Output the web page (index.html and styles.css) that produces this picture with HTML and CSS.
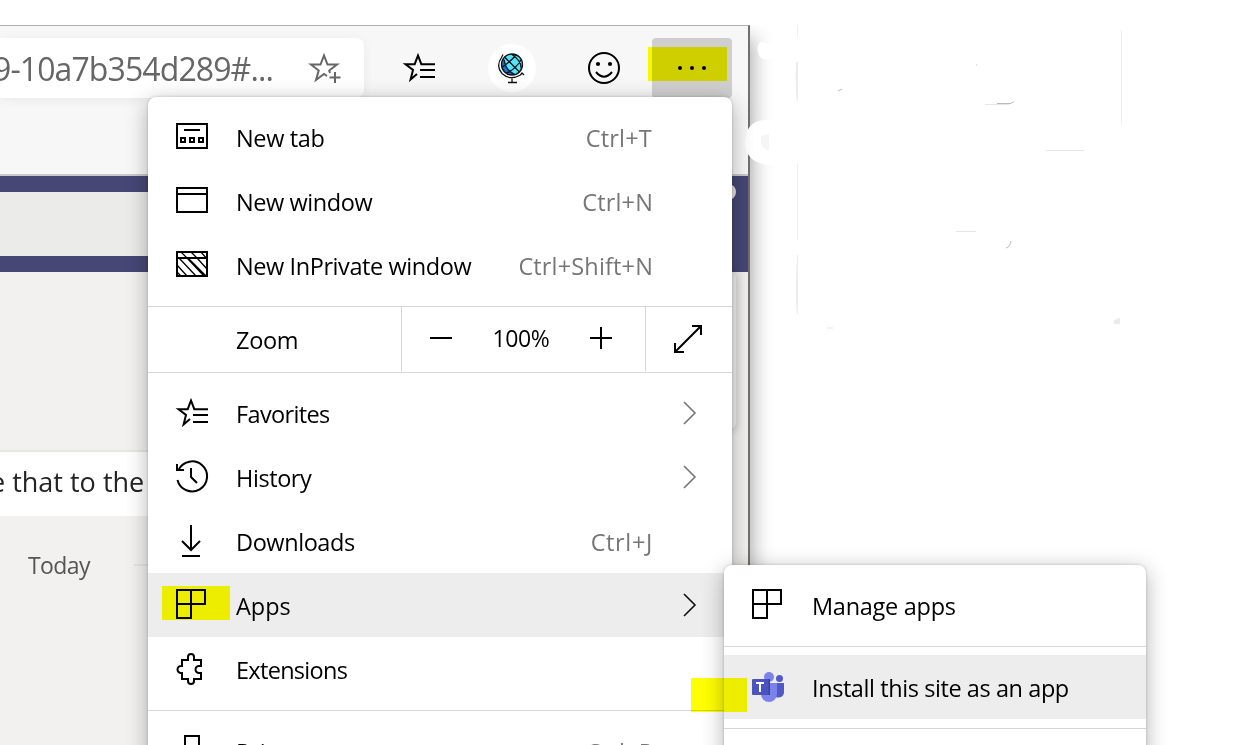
FILE: index.html
```
<!DOCTYPE html>
<html lang="en">
<head>
<meta charset="utf-8">
<title>Browser menu</title>
<link rel="stylesheet" href="styles.css">
</head>
<body>
<svg class="defs" width="0" height="0">
  <symbol id="favs" viewBox="0 0 34 34"><path d="M15 24 8.600 29.500 11 20 3.500 14.200h9.200L16 5.500l3.300 8.700H33M18 20h15M18 27h15" fill="none" stroke="currentColor" stroke-width="2"/></symbol>
  <symbol id="apps" viewBox="0 0 32 32"><path d="M2 2h28v14H2zM2 2h14v28H2z" fill="none" stroke="currentColor" stroke-width="2"/></symbol>
  <symbol id="chev" viewBox="0 0 16 26"><path d="m2 2 11 11L2 24" fill="none" stroke="currentColor" stroke-width="1.6"/></symbol>
</svg>
<main class="desktop">
  <section class="window">
    <header class="toolbar">
      <div class="address"><span class="url">9-10a7b354d289#...</span>
        <svg class="star" width="34" height="34" viewBox="0 0 34 34"><path d="m22 22-.8-2.500L29 13.500H19.500L16 4.500l-3.500 9H3l7.700 6-2.700 9.500 8-6 3 2M27 21v11M21.500 26.500h11" fill="none" stroke="#666" stroke-width="2"/></svg>
      </div>
      <svg class="tool-favs" width="34" height="34"><use href="#favs"/></svg>
      <div class="profile">
        <svg width="30" height="34" viewBox="0 0 30 34"><circle cx="16" cy="13.500" r="10.500" fill="#50e6ff"/><path d="M7.500 7.500A10.500 10.500 0 0 0 20 23.300C13 20 9 15 7.500 7.500Z" fill="#0078d4"/><g fill="none" stroke="#111" stroke-width="1.300"><circle cx="16" cy="13.500" r="10.500"/><path d="m8.500 6 15 15M16 3.500q10 7 9 14M8 8.500q2 12 11 15M6.500 16Q15 10 20 4M10 22q9-3 15-13M7 3.500 5.500 6.500Q-.5 15 6 22.500q8 7.500 18.500 1.500l1.500-2 2 2M16 27.500v4M12 31.500h9"/></g></svg>
      </div>
      <svg class="smile" width="34" height="34" viewBox="0 0 34 34"><circle cx="17" cy="17" r="15" fill="none" stroke="#000" stroke-width="2"/><circle cx="11" cy="13" r="2.1"/><circle cx="23" cy="13" r="2.1"/><path d="M9 21q8 9.500 16 0" fill="none" stroke="#000" stroke-width="2"/></svg>
      <div class="more"><i></i><i></i><i></i></div>
    </header>
    <div class="teams-bar"><div class="search"></div><div class="avatar"></div></div>
    <div class="content">
      <div class="panel"></div>
      <div class="message">e that to the</div>
      <div class="day"><span>Today</span><i></i></div>
    </div>
  </section>
  <svg class="marks" width="400" height="320" viewBox="740 20 400 320">
    <path d="M780 44h-12c-7-5-12 0-10 8 1 6 5 8 10 7h12ZM780 120h-9c-18-1-25 6-26 23 0 14 12 23 28 22h7Z" fill="#fff"/>
    <path d="M761 136q4-1 8-2v16q-6-1-8-6Z" fill="#f5f5f5"/>
    <g fill="none" stroke="#e6e6e6"><path d="M797.500 25v12M797.500 164v76M1121.500 30v95" stroke="#efefef"/><path d="M796 62q-1 25 1 39h1V62ZM797 255q-2 40 0 60l1-2v-58Z" fill="#ececec" stroke="none"/><path d="M985 104.500h24M1046 150.500h38M956 231.500h20M827 328h6"/><path d="M997 103.500h14l3-2M838 91l4-2M1006 248q4-1 5-7" stroke="#bbb"/><path d="m976.500 64v2" stroke="#eadfd1"/></g><path d="m1114 320 6-2v6h-6Z" fill="#eaeaea"/>
  </svg>

  <nav class="menu">
    <div class="item"><svg class="icon" width="34" height="34" viewBox="0 0 34 34"><path d="M2 5h30v24H2zM9 11h16"/><path d="M6 19h4v4H6zM15 19h4v4h-4zM24 19h4v4h-4z"/></svg><span class="t1">New tab</span><kbd class="k1">Ctrl+T</kbd></div>
    <div class="item"><svg class="icon" width="34" height="34" viewBox="0 0 34 34"><path d="M2 5h30v24H2zM2 11h30"/></svg><span class="t2">New window</span><kbd class="k2">Ctrl+N</kbd></div>
    <div class="item"><svg class="icon" width="34" height="34" viewBox="0 0 34 34"><path d="M2 5h30v24H2zM2 11h30"/><path d="m6 5 6 6 17 18M16 5l6 6 10 11M26 5l6 7M13 11l18 18M4 11l17 18M2 18l10 11M2 25l4 4" stroke-width="1.300"/></svg><span class="t2">New InPrivate window</span><kbd class="k2">Ctrl+Shift+N</kbd></div>
    <div class="zoom">
      <span class="zoom-label">Zoom</span>
      <div class="zoom-controls"><svg class="icon" width="24" height="24" viewBox="0 0 24 24"><path d="M1 12h22"/></svg><b>100%</b><svg class="icon" width="24" height="24" viewBox="0 0 24 24"><path d="M1 12h22M12 1v22"/></svg></div>
      <div class="full"><svg class="icon" width="30" height="30" viewBox="0 0 30 30"><path d="M2 28 28 2M19 2h9v9M2 19v9h9"/></svg></div>
    </div>
    <div class="item"><svg class="icon" width="34" height="34"><use href="#favs"/></svg><span class="t4">Favorites</span><svg class="chev" width="16" height="26"><use href="#chev"/></svg></div>
    <div class="item"><svg class="icon" width="34" height="34" viewBox="0 0 34 34"><path d="M2.500 21a15 15 0 1 0 1-10M2 5v6h7M16 9v9l6 6"/></svg><span class="t2">History</span><svg class="chev" width="16" height="26"><use href="#chev"/></svg></div>
    <div class="item"><svg class="icon" width="34" height="34" viewBox="0 0 34 34"><path d="M16 2v25M7 18l9 9 9-9M7 33h18"/></svg><span class="t2">Downloads</span><kbd class="k4">Ctrl+J</kbd></div>
    <div class="item active"><svg class="icon apps" width="32" height="32"><use href="#apps"/></svg><span>Apps</span><svg class="chev" width="16" height="26"><use href="#chev"/></svg></div>
    <div class="item"><svg class="icon" width="34" height="34" viewBox="0 0 34 34"><path d="M7 9h6V6a3 3 0 0 1 6 0v3h7v6h-2a3.500 3.500 0 0 0 0 7h2v6h-7v2a3 3 0 0 1-6 0v-2H7v-6H6a3.500 3.500 0 0 1 0-7h1Z"/></svg><span class="t8">Extensions</span></div>
    <hr>
    <div class="item"><svg class="icon" width="34" height="34" viewBox="0 0 34 34"><path d="M10 13V3h14v10M2 13h30v14H2z"/></svg><span>Print</span><kbd class="k2">Ctrl+P</kbd></div>
  </nav>

  <nav class="submenu">
    <div class="item"><svg class="icon apps" width="32" height="32"><use href="#apps"/></svg><span class="t9">Manage apps</span></div>
    <hr>
    <div class="item active"><svg class="icon teams" width="34" height="34" viewBox="0 0 34 34"><g stroke="none"><circle cx="18" cy="8" r="5" fill="#7b83eb"/><circle cx="28.500" cy="9.500" r="3.500" fill="#5059c9"/><path d="M25 14h8v9a5.500 5.500 0 0 1-8 5Z" fill="#5059c9"/><path d="M10 14h16v11a8 8 0 0 1-16 0Z" fill="#7b83eb"/><path d="M10 10h9v16h-8Z" fill="#3c4299"/><rect x="1" y="10" width="16.500" height="16" rx="1" fill="#4b53bc"/><path d="M5 13h8v2h-3v8H8v-8H5Z" fill="#fff"/></g></svg><span class="t2">Install this site as an app</span></div>
    <hr>
  </nav>
  <i class="highlight h-more"></i><i class="highlight h-apps"></i><i class="highlight h-install"></i>
</main>
</body>
</html>
```
FILE: styles.css
```
* { box-sizing: border-box; }
body { margin: 0; background: #fff; font: 23.5px/1 "Open Sans", "Noto Sans", sans-serif; color: #000; }
.defs { position: absolute; }
.desktop { position: relative; width: 1253px; height: 745px; overflow: hidden; padding-top: 25px; }
.window { width: 750px; height: 730px; border-top: 1px solid #b0b0b0; border-right: 2px solid #707070; background: #f2f1ef; box-shadow: 4px 12px 18px rgba(0,0,0,.3); clip-path: inset(0 -40px 0 0); }
.toolbar { display: flex; align-items: flex-start; height: 150px; padding-top: 12px; background: #f7f7f7; border-bottom: 2px solid #c8cac8; }
.address { display: flex; width: 364px; height: 60px; background: #fff; border-radius: 0 8px 8px 0; box-shadow: 0 2px 12px rgba(0,0,0,.06); }
.url { width: 306px; margin-left: -7px; padding-top: 1px; font-size: 32px; line-height: 60px; color: #666; white-space: nowrap; letter-spacing: -.9px; }
.star { margin: 13px 0 0 9px; }
.tool-favs { margin: 12px 0 0 38px; }
.profile { display: flex; justify-content: center; width: 48px; height: 48px; padding-top: 7px; margin: 6px 0 0 52px; background: #fff; border-radius: 50%; }
.profile svg { margin-left: -3px; }
.smile { margin: 13px 0 0 51px; }
.more { display: flex; gap: 8px; width: 80px; height: 60px; margin-left: 31px; padding: 28px 0 0 26px; background: #cfcfcf; border-radius: 4px; }
.more i { width: 4px; height: 4px; background: #000; border-radius: 50%; }
.teams-bar { display: flex; height: 96px; padding-top: 16px; background: #464775; overflow: hidden; }
.search { width: 500px; height: 64px; background: #ebebea; }
.avatar { width: 16px; height: 16px; margin: -8px 0 0 220px; background: #e6e4e2; border-radius: 50%; }
.content { height: 473px; background: #f2f1ef; }
.panel { width: 436px; height: 157px; margin: 0 0 21px 300px; background: #f2f1ef; border-radius: 0 6px 6px 0; box-shadow: 2px 2px 7px rgba(0,0,0,.12); }
.message { width: 600px; height: 66px; text-indent: -10px; background: #fff; border-top: 2px solid #e6e6e4; font-size: 27px; line-height: 59px; color: #242424; }
.day { display: flex; align-items: center; height: 98px; padding-left: 28px; font-size: 23px; color: #555; }
.day span { width: 106px; letter-spacing: -.6px; }
.day i { width: 300px; height: 2px; background: #e5e4e2; }
.marks { position: absolute; left: 740px; top: 20px; }
.menu, .submenu { position: absolute; padding-top: 8px; background: #fff; border-radius: 8px; box-shadow: 0 5px 22px rgba(0,0,0,.3), 0 0 3px rgba(0,0,0,.2); }
.menu { left: 148px; top: 97px; width: 584px; height: 670px; }
.submenu { left: 724px; top: 565px; width: 422px; height: 220px; }
.item { display: flex; height: 64px; padding-left: 27px; line-height: 67px; white-space: nowrap; }
.item span { margin-left: 27px; }
.item .t2 { letter-spacing: -.42px; }
.item .t1 { letter-spacing: -.35px; }
.item .t4 { letter-spacing: -.65px; }
.item .t8 { letter-spacing: -.7px; }
.item .t9 { letter-spacing: -.28px; }
.icon { flex: none; fill: none; stroke: #000; stroke-width: 2; color: #000; }
.item .icon { margin-top: 14px; }
.item .apps { margin: 15px 2px 0 0; }
kbd { font: inherit; color: #767676; margin: 0 79px 0 auto; }
.k1 { letter-spacing: .2px; margin-right: 80px; }
.k2 { letter-spacing: .15px; }
.k4 { letter-spacing: .65px; }
.chev { margin: 19px 34px 0 auto; color: #767676; }
.active { background: #ededed; }
.active .chev { color: #111; }
hr { height: 1px; margin: 9px 0 8px; border: 0; background: #d6d6d6; }
.zoom { display: flex; height: 67px; margin: 9px 0 8px; border: 1px solid #d6d6d6; border-width: 1px 0; }
.zoom-label { width: 253px; padding-left: 88px; line-height: 67px; letter-spacing: -.3px; }
.zoom-controls { display: flex; align-items: center; justify-content: space-between; width: 245px; height: 64px; padding: 0 32px 2px 27px; border: 1px solid #d6d6d6; border-width: 0 1px; }
.zoom b { font-weight: 400; font-size: 23px; letter-spacing: -.4px; padding-top: 1px; }
.full { padding: 17px 0 0 27px; }
.highlight { position: absolute; background: #ff0; mix-blend-mode: multiply; }
.h-more { left: 648px; top: 47px; width: 79px; height: 34px; }
.h-apps { left: 162px; top: 586px; width: 68px; height: 34px; }
.h-install { left: 691px; top: 678px; width: 56px; height: 34px; }
```
